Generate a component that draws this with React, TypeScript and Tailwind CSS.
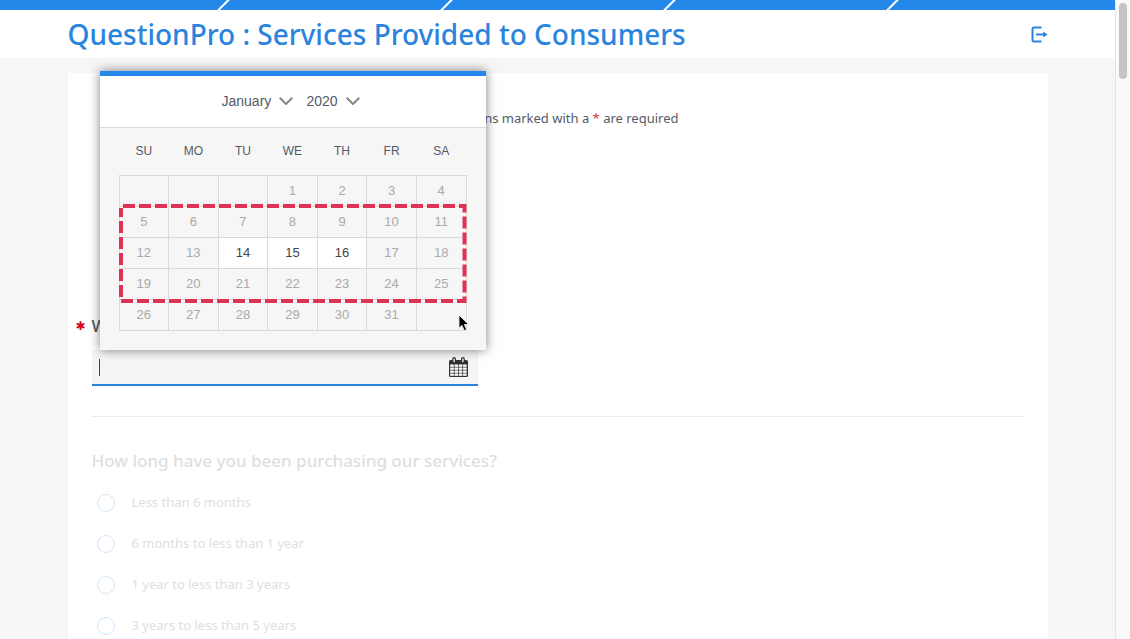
import { useState } from 'react';
import clsx from 'clsx';

const weekdays = ['SU', 'MO', 'TU', 'WE', 'TH', 'FR', 'SA'];
const months = ['January', 'February', 'March', 'April', 'May', 'June', 'July', 'August', 'September', 'October', 'November', 'December'];
const years = ['2019', '2020', '2021'];

// January 2020, 0 = empty cell
const weeks = [
  [0, 0, 0, 1, 2, 3, 4],
  [5, 6, 7, 8, 9, 10, 11],
  [12, 13, 14, 15, 16, 17, 18],
  [19, 20, 21, 22, 23, 24, 25],
  [26, 27, 28, 29, 30, 31, 0],
];
const openDays = [14, 15, 16];

const answers = [
  'Less than 6 months',
  '6 months to less than 1 year',
  '1 year to less than 3 years',
  '3 years to less than 5 years',
];

function Chevron() {
  return (
    <svg className="pointer-events-none absolute right-0 top-2 h-2 w-[14px]" viewBox="0 0 14 8" fill="none" stroke="#858585" strokeWidth="2">
      <path d="M0.7 0.8 L7 7 L13.3 0.8" />
    </svg>
  );
}

function ProgressBar() {
  return (
    <div className="grid h-[10px] grid-cols-5 bg-[#2487ea]">
      {[0, 1, 2, 3, 4].map((step) => (
        <div key={step} className="relative">
          {step < 4 && (
            <svg className="absolute -right-2 top-0 h-[10px] w-4" viewBox="0 0 16 10" stroke="#fff" strokeWidth="2">
              <path d="M2.5 11 L14.5 -1" />
            </svg>
          )}
        </div>
      ))}
    </div>
  );
}

function CalendarIcon() {
  return (
    <svg className="h-5 w-[19px]" viewBox="0 0 19 20">
      <rect x="0" y="3" width="19" height="17" rx="1.5" fill="#333" />
      <rect x="3.2" y="0" width="3.8" height="6" rx="1.9" fill="#333" />
      <rect x="12" y="0" width="3.8" height="6" rx="1.9" fill="#333" />
      <rect x="4.4" y="1.2" width="1.4" height="4" rx="0.7" fill="#f5f5f5" />
      <rect x="13.2" y="1.2" width="1.4" height="4" rx="0.7" fill="#f5f5f5" />
      {[7.5, 10.5, 13.5, 16.5].map((y) =>
        [1.2, 5.5, 9.8, 14.1].map((x) => (
          <rect key={`${x}-${y}`} x={x} y={y} width="3.6" height="2.3" fill="#fff" />
        ))
      )}
    </svg>
  );
}

function DatePicker() {
  const [month, setMonth] = useState('January');
  const [year, setYear] = useState('2020');

  return (
    <div className="absolute bottom-full left-2 z-10 w-full border-t-[5px] border-[#2487ea] bg-[#f6f6f6] font-['Liberation_Sans',sans-serif] shadow-[0_0_10px_rgba(0,0,0,0.5)]">
      <div className="flex h-[52px] items-center justify-center gap-[14px] border-b border-[#d9d9d9] bg-white pr-1 text-sm text-[#545b66]">
        <div className="relative w-[71px]">
          <select aria-label="Month" value={month} onChange={(e) => setMonth(e.target.value)} className="block h-6 w-full appearance-none bg-transparent outline-none">
            {months.map((m) => <option key={m}>{m}</option>)}
          </select>
          <Chevron />
        </div>
        <div className="relative w-[53px]">
          <select aria-label="Year" value={year} onChange={(e) => setYear(e.target.value)} className="block h-6 w-full appearance-none bg-transparent outline-none">
            {years.map((y) => <option key={y}>{y}</option>)}
          </select>
          <Chevron />
        </div>
      </div>

      <div className="relative px-[19px] pb-[19px]">
        <table className="w-full table-fixed border-collapse text-center">
          <thead>
            <tr className="h-12 text-xs text-[#545b66]">
              {weekdays.map((d) => <th key={d} scope="col" className="p-0 font-normal">{d}</th>)}
            </tr>
          </thead>
          <tbody className="text-[13px]">
            {weeks.map((week, i) => (
              <tr key={i} className="h-[31px]">
                {week.map((day, j) => (
                  <td key={j} className={clsx('border border-[#d9d9d9] p-0', openDays.includes(day) && 'bg-white')}>
                    {day > 0 && (
                      <button
                        type="button"
                        disabled={!openDays.includes(day)}
                        className="block h-[30px] w-full text-[#444] disabled:text-[#aaa]"
                      >
                        {day}
                      </button>
                    )}
                  </td>
                ))}
              </tr>
            ))}
          </tbody>
        </table>

        {/* highlighted weeks */}
        <svg className="pointer-events-none absolute left-[19px] top-[76px] h-[99px] w-[348px]" viewBox="0 0 348 99" fill="none" stroke="#dc3452" strokeWidth="4" strokeDasharray="12 4">
          <path d="M4 2 H345.5 V97 H2 V4" />
        </svg>

        {/* pointer */}
        <svg className="pointer-events-none absolute bottom-[18px] right-4 h-[18px] w-3" viewBox="0 0 12 18">
          <path d="M1 1 V14.2 L4 11.4 L6.2 16.6 L8.6 15.6 L6.4 10.5 H10.6 Z" fill="#000" stroke="#fff" strokeWidth="0.8" />
        </svg>
      </div>
    </div>
  );
}

export default function App() {
  return (
    <div className="flex h-screen overflow-hidden bg-[#f6f6f6] font-['Noto_Sans',sans-serif]">
      <div className="min-w-0 flex-1">
        <ProgressBar />
        <header className="h-12 bg-white">
          <div className="mx-auto flex h-full max-w-[980px] items-center justify-between">
            <h1 className="text-[28px] font-medium leading-[48px] text-[#2a84de]">QuestionPro : Services Provided to Consumers</h1>
            <button type="button" aria-label="Exit survey" className="text-[#2a84de]">
              <svg className="h-[17px] w-[17px]" viewBox="0 0 17 17" fill="none" stroke="currentColor" strokeWidth="2">
                <path d="M10.5 1.5 H3 Q1.5 1.5 1.5 3 V14 Q1.5 15.5 3 15.5 H10.5" />
                <path d="M5 8.5 H13" />
                <path d="M12.2 5.6 L16.6 8.5 L12.2 11.4 Z" fill="currentColor" stroke="none" />
              </svg>
            </button>
          </div>
        </header>

        <main className="mx-auto mt-[15px] min-h-full max-w-[980px] bg-white px-6 pt-[33px]">
          <p className="text-center text-[13px] leading-6 text-[#545b66]">
            Questions marked with a <span className="text-[#e0303c]">*</span> are required
          </p>

          <section className="mt-[184px] border-b border-[#ececec] pb-[30px]">
            <label htmlFor="date" className="relative block text-[17px] font-medium leading-6 text-[#545b66]">
              <span className="absolute -left-4 font-['DejaVu_Sans',sans-serif] text-xs leading-6 text-[#d0021b]">✱</span>
              W
            </label>
            <div className="relative mt-3 flex h-9 w-[386px] items-center border-b-2 border-[#2a84de] bg-[#f5f5f5] pl-[7px] pr-[10px]">
              <DatePicker />
              <span className="h-[17px] w-px bg-[#444]" />
              <input id="date" type="text" className="h-full min-w-0 flex-1 bg-transparent text-sm outline-none" />
              <button type="button" aria-label="Open calendar">
                <CalendarIcon />
              </button>
            </div>
          </section>

          <fieldset className="pt-[30px]">
            <legend className="float-left w-full text-[17px] font-medium leading-7 text-[#dddfe1]">
              How long have you been purchasing our services?
            </legend>
            <div className="clear-both pt-[7px] text-[13px] text-[#dddfe1]">
              {answers.map((answer) => (
                <label key={answer} className="flex h-[41px] items-center gap-[17px] pl-[5px]">
                  <input type="radio" name="duration" className="h-[18px] w-[18px] appearance-none rounded-full border border-[#d3e6f9] bg-white" />
                  {answer}
                </label>
              ))}
            </div>
          </fieldset>
        </main>
      </div>

      {/* scrollbar track */}
      <div className="w-[15px] border-l border-[#e5e5e5] bg-[#fafafa] pl-[3px] pt-[3px]">
        <div className="h-[76px] w-2 rounded-full bg-[#c4c4c4]" />
      </div>
    </div>
  );
}
